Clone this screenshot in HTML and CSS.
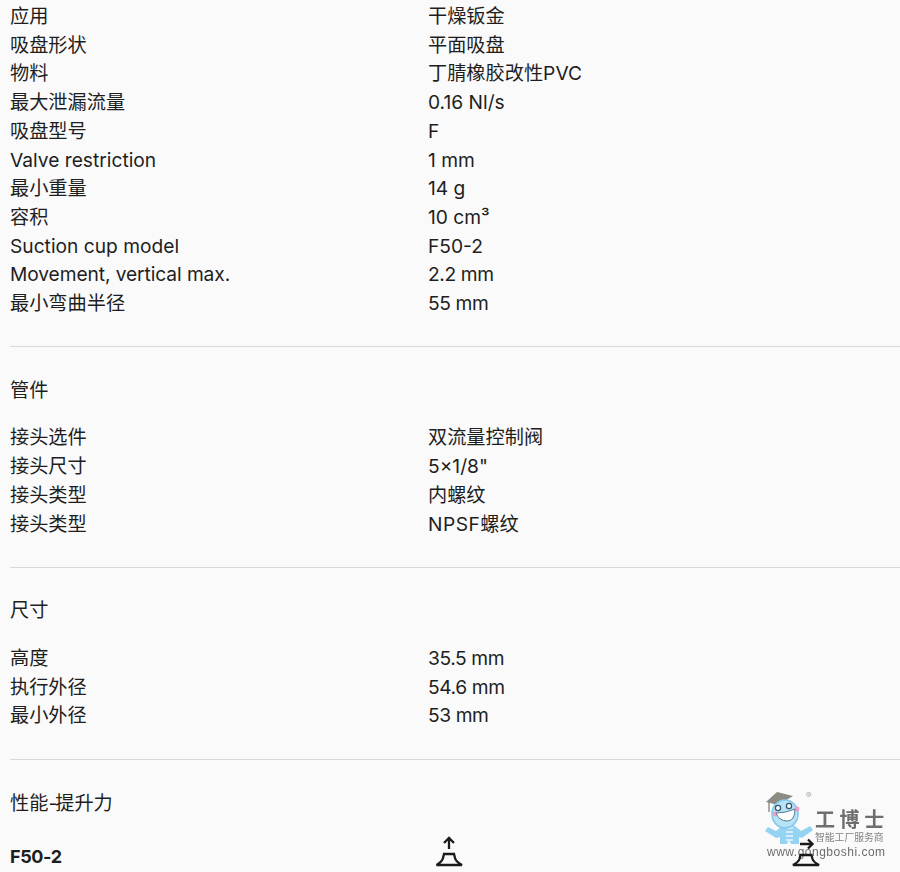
FILE: index.html
```html
<!DOCTYPE html>
<html lang="zh-CN">
<head>
<meta charset="utf-8">
<title>F50-2</title>
<link rel="stylesheet" href="styles.css">
</head>
<body>
<aside class="mark" aria-label="工博士">
  <svg class="mascot" viewBox="0 0 50 56" width="50" height="56" aria-hidden="true">
    <path class="cap" d="M1 12L12 2L28 6L13 15Z"/>
    <path class="tassel" d="M4 12V22"/>
    <path class="body" d="M17 36H30L36 41L45 36L48 40L37 48L34 47V54H26L24 50L22 54H15V47L11 48L0 41L3 37L11 41Z"/>
    <path class="belly" d="M21 38H28M21 42H28M21 46H28M21 50H28"/>
    <ellipse class="head" cx="20" cy="24" rx="13" ry="14"/>
    <circle class="cheek" cx="10" cy="24" r="2.4"/>
    <circle class="cheek" cx="32" cy="19" r="2.4"/>
    <path class="smile" d="M11 23Q21 23 30 19Q30 31 22 31Q14 31 11 23Z"/>
    <circle class="eye" cx="13" cy="18" r="2.6"/>
    <circle class="eye" cx="24" cy="16" r="2.6"/>
  </svg>
  <span class="reg">®</span>
  <span class="brand">工博士</span>
  <span class="slogan">智能工厂服务商</span>
  <span class="url">www.gongboshi.com</span>
</aside>
<main class="page">
  <section class="group">
    <div class="row"><span>应用</span><span>干燥钣金</span></div>
    <div class="row"><span>吸盘形状</span><span>平面吸盘</span></div>
    <div class="row"><span>物料</span><span>丁腈橡胶改性PVC</span></div>
    <div class="row"><span>最大泄漏流量</span><span>0.16 Nl/s</span></div>
    <div class="row"><span>吸盘型号</span><span>F</span></div>
    <div class="row"><span>Valve restriction</span><span>1 mm</span></div>
    <div class="row"><span>最小重量</span><span>14 g</span></div>
    <div class="row"><span>容积</span><span>10 cm³</span></div>
    <div class="row"><span>Suction cup model</span><span>F50-2</span></div>
    <div class="row"><span class="tight">Movement, vertical max.</span><span class="num">2.2 mm</span></div>
    <div class="row"><span>最小弯曲半径</span><span class="num">55 mm</span></div>
  </section>
  <section class="group">
    <h2 class="title">管件</h2>
    <div class="row"><span>接头选件</span><span>双流量控制阀</span></div>
    <div class="row"><span>接头尺寸</span><span>5×1/8"</span></div>
    <div class="row"><span>接头类型</span><span>内螺纹</span></div>
    <div class="row"><span>接头类型</span><span><span class="wide">NPSF</span>螺纹</span></div>
  </section>
  <section class="group">
    <h2 class="title">尺寸</h2>
    <div class="row"><span>高度</span><span class="num">35.5 mm</span></div>
    <div class="row"><span>执行外径</span><span class="num">54.6 mm</span></div>
    <div class="row"><span>最小外径</span><span class="num">53 mm</span></div>
  </section>
  <section class="group-last">
    <h2 class="title">性能<span class="dash">-</span>提升力</h2>
    <div class="perf">
      <strong class="perf-name">F50-2</strong>
      <svg class="cup cup-up" viewBox="0 0 30 34" width="30" height="34" aria-hidden="true">
        <path d="M14 14V3M9 8L14 3L19 8M9 19H19L20 23Q21 27 27 30H1.500Q7 27 8 23Z"/>
      </svg>
      <svg class="cup cup-side" viewBox="0 0 30 34" width="30" height="34" aria-hidden="true">
        <path d="M9 9H21M17 4.500L21.500 9L17 13.500M9.500 20H20.500L21.500 24Q22.500 27 28 30H2Q7.500 27 8.500 24Z"/>
      </svg>
    </div>
  </section>
</main>
</body>
</html>
```
FILE: styles.css
```css
html, body {
  margin: 0;
  padding: 0;
  height: 872px;
  overflow: hidden;
  background: #fafafa;
}
body {
  position: relative;
  font-family: Inter, "Noto Sans CJK SC", sans-serif;
  font-size: 19.2px;
  line-height: 28.7px;
  color: #1e1e1e;
}
.page {
  padding: 2px 0 0 10px;
}
.group {
  padding-bottom: 28.5px;
  margin-bottom: 28.5px;
  border-bottom: 1px solid #d9d9d9;
}
.group-last {
  margin-top: 29.5px;
}
.title {
  margin: 0 0 19px;
  font-size: 19.2px;
  font-weight: 400;
  line-height: 28.7px;
}
.dash { letter-spacing: -2px; }
.row {
  display: grid;
  grid-template-columns: 418px 1fr;
}
.num { letter-spacing: -.4px; }
.tight { letter-spacing: -.09px; }
.wide { letter-spacing: .5px; }
.perf {
  position: relative;
  height: 34px;
  margin-top: -2px;
  padding-top: 8px;
  box-sizing: border-box;
}
.perf-name {
  display: block;
  font-weight: 700;
  font-size: 18px;
  letter-spacing: -.4px;
}
.cup {
  position: absolute;
  top: 0;
  fill: none;
  stroke: #1a1a1a;
  stroke-width: 2.3;
}
.cup-up { left: 425px; }
.cup-side { left: 781px; }
.mark {
  position: absolute;
  left: 740px;
  top: 772px;
  width: 160px;
  height: 100px;
  filter: blur(.35px);
}
.mascot {
  position: absolute;
  left: 25px;
  top: 18px;
}
.cap { fill: #8c8c84; }
.tassel { fill: none; stroke: #8c8c84; stroke-width: 1.4; }
.head { fill: #b8e2f6; stroke: #84c8ec; stroke-width: 1.6; }
.body { fill: #94d3f2; }
.belly { fill: none; stroke: #e8f6fc; stroke-width: 1.4; }
.smile { fill: #fff; stroke: #4f7c96; stroke-width: 1; }
.eye { fill: #fff; stroke: #35566c; stroke-width: 1.3; }
.cheek { fill: #f29cc6; }
.reg {
  position: absolute;
  left: 66px;
  top: 18px;
  font-size: 8px;
  line-height: 10px;
  color: #999;
}
.brand {
  position: absolute;
  left: 75px;
  top: 35px;
  font-family: "Noto Sans CJK SC", sans-serif;
  font-size: 20px;
  font-weight: 700;
  line-height: 24px;
  letter-spacing: 4.6px;
  color: #6e6e6e;
}
.slogan {
  position: absolute;
  left: 75px;
  top: 58px;
  font-family: "Noto Sans CJK SC", sans-serif;
  font-size: 9.8px;
  line-height: 14px;
  color: #808080;
}
.url {
  position: absolute;
  left: 27px;
  top: 73px;
  font-family: "Liberation Sans", sans-serif;
  font-size: 12px;
  line-height: 14px;
  letter-spacing: .5px;
  color: #6e6e6e;
}
```
